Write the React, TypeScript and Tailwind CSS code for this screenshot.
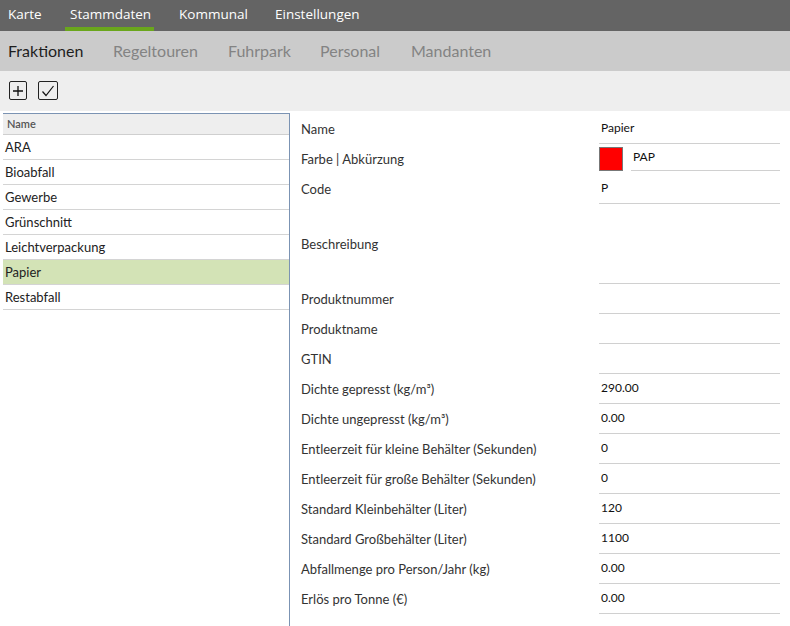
import React from "react";

const rows: { label: string; value: string; tall?: boolean; color?: boolean }[] = [
  { label: "Name", value: "Papier" },
  { label: "Farbe | Abkürzung", value: "PAP", color: true },
  { label: "Code", value: "P" },
  { label: "Beschreibung", value: "", tall: true },
  { label: "Produktnummer", value: "" },
  { label: "Produktname", value: "" },
  { label: "GTIN", value: "" },
  { label: "Dichte gepresst (kg/m³)", value: "290.00" },
  { label: "Dichte ungepresst (kg/m³)", value: "0.00" },
  { label: "Entleerzeit für kleine Behälter (Sekunden)", value: "0" },
  { label: "Entleerzeit für große Behälter (Sekunden)", value: "0" },
  { label: "Standard Kleinbehälter (Liter)", value: "120" },
  { label: "Standard Großbehälter (Liter)", value: "1100" },
  { label: "Abfallmenge pro Person/Jahr (kg)", value: "0.00" },
  { label: "Erlös pro Tonne (€)", value: "0.00" },
];

const items = ["ARA", "Bioabfall", "Gewerbe", "Grünschnitt", "Leichtverpackung", "Papier", "Restabfall"];

export default function App() {
  return (
    <div className="w-[790px] h-[626px] overflow-hidden bg-white flex flex-col" style={{ fontFamily: "Lato, 'Open Sans', sans-serif" }}>
      {/* top nav */}
      <div className="h-[31px] bg-[#646464] flex pl-[3px] text-[13.5px] text-white shrink-0" style={{ fontFamily: "'Open Sans', sans-serif" }}>
        <div className="w-[62px] pl-[5px] flex items-center pb-[3px]">Karte</div>
        <div className="w-[89px] mr-[20px] pl-[5px] flex items-center pb-[3px] border-b-[4px] border-[#6aa61c] pt-[4px]">Stammdaten</div>
        <div className="w-[96px] pl-[5px] flex items-center pb-[3px]">Kommunal</div>
        <div className="pl-[5px] flex items-center pb-[3px]">Einstellungen</div>
      </div>
      {/* sub nav */}
      <div className="h-[40px] bg-[#cbcbcb] flex items-center pl-[8px] text-[16px] shrink-0">
        <div className="w-[105px] text-[#1e1e1e]">Fraktionen</div>
        <div className="w-[115px] text-[#838383]">Regeltouren</div>
        <div className="w-[92px] text-[#838383]">Fuhrpark</div>
        <div className="w-[91px] text-[#838383]">Personal</div>
        <div className="text-[#838383]">Mandanten</div>
      </div>
      {/* toolbar */}
      <div className="h-[40px] bg-[#eeeeee] flex items-start pt-[10px] pl-[9px] gap-[11px] shrink-0">
        <div className="w-[18px] h-[19px] border border-[#222] rounded-[2px] flex items-center justify-center">
          <svg width="12" height="12" viewBox="0 0 12 12">
            <path d="M6 1v10M1 6h10" stroke="#111" strokeWidth="1.3" />
          </svg>
        </div>
        <div className="w-[20px] h-[19px] border border-[#222] rounded-[2px] flex items-center justify-center">
          <svg width="14" height="12" viewBox="0 0 14 12">
            <path d="M1.5 6.5l3.5 4L12.5 1" stroke="#111" strokeWidth="1.2" fill="none" />
          </svg>
        </div>
      </div>
      {/* main */}
      <div className="flex flex-1 min-h-0">
        <div className="ml-[3px] mt-[2px] w-[287px] border-t border-r border-[#7b93b3] flex flex-col">
          <div className="h-[21px] bg-[#eeeeee] border-b border-[#cfcfcf] flex items-center pl-[4px] text-[11px] font-semibold text-[#555]">
            Name
          </div>
          {items.map((it) => (
            <div
              key={it}
              className={`h-[25px] border-b border-[#d4d4d4] flex items-center pl-[2px] pt-[2px] text-[13px] text-[#222] ${it === "Papier" ? "bg-[#d3e3b6]" : ""}`}
            >
              {it}
            </div>
          ))}
        </div>
        <div className="flex-1 pt-[3px] pl-[11px] pr-[10px] flex flex-col">
          {rows.map((r) => (
            <div key={r.label} className={`flex ${r.tall ? "h-[80px]" : "h-[30px]"}`}>
              <div className="w-[298px] flex items-center pt-[2px] text-[13px] text-[#333]">{r.label}</div>
              {r.color ? (
                <div className="flex-1 flex items-start">
                  <div className="w-[24px] h-[24px] mt-[3px] bg-[#ff0000] border border-[#777]" />
                  <div className="ml-[8px] flex-1 h-[27px] border-b border-[#d0d0d0] flex items-center pl-[2px] text-[12px] text-[#111]">
                    {r.value}
                  </div>
                </div>
              ) : (
                <div className="flex-1 border-b border-[#d0d0d0] flex items-center pl-[2px] text-[12px] text-[#111] pb-[1px]">
                  {r.value}
                </div>
              )}
            </div>
          ))}
        </div>
      </div>
    </div>
  );
}
